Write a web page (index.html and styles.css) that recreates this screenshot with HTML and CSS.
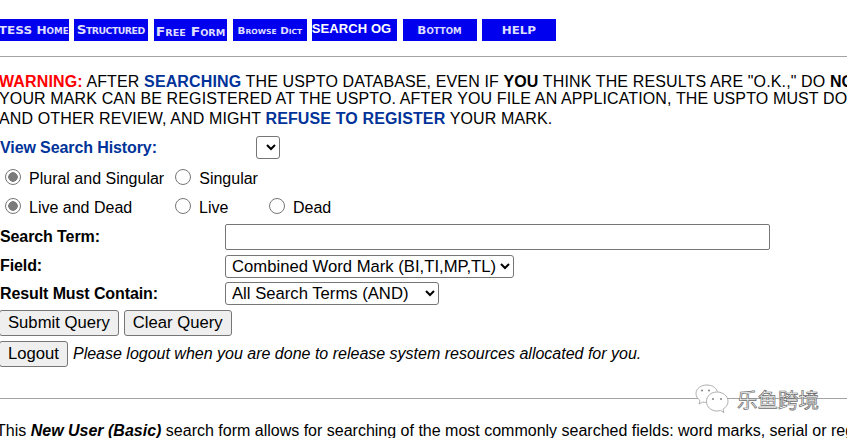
FILE: index.html
```html
<!DOCTYPE html>
<html lang="en">
<head>
<meta charset="utf-8">
<title>Trademark Search</title>
<link rel="stylesheet" href="styles.css">
</head>
<body>
<nav class="nav">
  <a class="btn w1"><span class="t t1">TESS Home</span></a>
  <a class="btn w2"><span class="t t2">Structured</span></a>
  <a class="btn w3"><span class="t t3">Free Form</span></a>
  <a class="btn w4"><span class="t t4">Browse Dict</span></a>
  <a class="btn w5"><span class="t5">SEARCH OG</span></a>
  <a class="btn w6"><span class="t t6">Bottom</span></a>
  <a class="btn w7"><span class="t t7">HELP</span></a>
</nav>
<hr class="rule rule-top">
<p class="warning"><span class="line"><b class="red">WARNING:</b> AFTER <b class="navy">SEARCHING</b> THE USPTO DATABASE, EVEN IF <b>YOU</b> THINK THE RESULTS ARE "O.K.," DO <b>NOT</b> ASSUME THAT</span><span class="line l2">YOUR MARK CAN BE REGISTERED AT THE USPTO. AFTER YOU FILE AN APPLICATION, THE USPTO MUST DO ITS OWN SEARCH</span><span class="line l3">AND OTHER REVIEW, AND MIGHT <b class="navy">REFUSE TO REGISTER</b> YOUR MARK.</span></p>
<form class="form">
  <div class="row history">
    <b class="navy label-h">View Search History:</b>
    <select class="sel-empty"><option></option></select>
  </div>
  <div class="row radios r1">
    <label class="opt o1"><input type="radio" name="p" checked>Plural and Singular</label>
    <label class="opt"><input type="radio" name="p">Singular</label>
  </div>
  <div class="row radios r2">
    <label class="opt o1b"><input type="radio" name="l" checked>Live and Dead</label>
    <label class="opt o2b"><input type="radio" name="l">Live</label>
    <label class="opt"><input type="radio" name="l">Dead</label>
  </div>
  <div class="row field r-term">
    <b class="lab">Search Term:</b>
    <input class="term" type="text">
  </div>
  <div class="row field r-field">
    <b class="lab">Field:</b>
    <select class="sel s-field"><option>Combined Word Mark (BI,TI,MP,TL)</option></select>
  </div>
  <div class="row field r-must">
    <b class="lab">Result Must Contain:</b>
    <select class="sel s-must"><option>All Search Terms (AND)</option></select>
  </div>
  <div class="row actions">
    <button type="button" class="b">Submit Query</button>
    <button type="button" class="b">Clear Query</button>
  </div>
  <div class="row actions logout">
    <button type="button" class="b">Logout</button>
    <i>Please logout when you are done to release system resources allocated for you.</i>
  </div>
</form>
<hr class="rule rule-bottom">
<p class="intro">This <b><i>New User (Basic)</i></b> search form allows for searching of the most commonly searched fields: word marks, serial or registration numbers, and owner names.</p>
<div class="mark">
  <svg class="wx" width="34" height="30" viewBox="0 0 34 30" fill="#fff" stroke="#9a9a9a" stroke-width=".8">
    <path d="M12 1C6 1 1 4.500 1 9.500c0 3 1.500 5 4 7l-1 3.500 4-2c1 .3 2 .5 3.500 .5"/>
    <path d="M12 1c5 0 9 2.500 10.500 6.500"/>
    <path d="M22 8c-6 0-10.500 4-10.500 9.500S16 27 22 27c1.500 0 2.500-.2 3.500-.6l3.500 2.200-1-3.400c3-1.800 5-4.800 5-7.700C33 12 28 8 22 8z"/>
    <circle cx="7" cy="6.500" r="1.100" fill="#8c8c8c" stroke="none"/>
    <circle cx="14" cy="6.500" r="1.100" fill="#8c8c8c" stroke="none"/>
    <circle cx="18" cy="15" r="1.100" fill="#8c8c8c" stroke="none"/>
    <circle cx="26" cy="15" r="1.100" fill="#8c8c8c" stroke="none"/>
  </svg>
  <span class="wm">乐鱼跨境</span>
</div>
</body>
</html>
```
FILE: styles.css
```css
html, body {
  margin: 0;
  padding: 0;
  height: 438px;
  overflow: hidden;
  background: #fff;
  color: #000;
  font: 16px/18px "Liberation Sans", Arial, sans-serif;
}
body { position: relative; width: 847px; }
.nav {
  display: flex;
  align-items: flex-start;
  margin: 19px 0 0 -6px;
  height: 22px;
}
.btn {
  display: flex;
  height: 22px;
  flex: none;
  align-items: center;
  justify-content: center;
  background: #0000ee;
  color: #dedeff;
  white-space: nowrap;
  overflow: hidden;
}
.t {
  display: block;
  font-family: "DejaVu Sans", sans-serif;
  font-weight: bold;
  font-variant: small-caps;
}
.w1 { width: 75px; margin-right: 5px; }
.w2 { width: 74px; margin-right: 6px; }
.w3 { width: 73px; margin-right: 6px; }
.w4 { width: 74px; margin-right: 5px; }
.w5 { width: 85px; margin-right: 6px; }
.w6 { width: 74px; margin-right: 5px; }
.w7 { width: 74px; }
.t1 { font-size: 11px; transform: translate(2px, 1px) scaleX(1.1); }
.t2 { font-size: 13px; letter-spacing: -.5px; transform: scaleX(1.04); }
.t3 { font-size: 13px; transform: translateY(2px) scaleX(1.07); }
.t4 { font-size: 9.500px; transform: translateY(1px) scaleX(1.08); }
.t5 {
  display: block;
  font: bold 13px "Liberation Sans", sans-serif;
  letter-spacing: .1px;
  color: #fff;
  transform: translate(-3px, -2px);
}
.t6 { font-size: 11px; transform: translateY(1px) scaleX(1.08); }
.t7 { font-size: 11px; transform: translateY(1px) scaleX(1.08); }
.rule {
  border: 0;
  height: 1px;
  background: #a3a3a3;
  margin: 0;
}
.rule-top { margin-top: 15px; }
.warning {
  margin: 16px 0 0 -1px;
  white-space: nowrap;
  letter-spacing: .13px;
}
.line { display: block; height: 18px; }
.l2 { margin-top: -1px; }
.l3 { margin-top: 2px; }
.red { color: #ff0000; }
.navy { color: #003399; }
.form { margin: 8px 0 0; }
.row { display: flex; align-items: center; white-space: nowrap; }
.history { height: 23px; }
.label-h { width: 256px; letter-spacing: -.1px; }
.sel-empty, .sel, .term, .b {
  font: 16.670px "Liberation Sans", Arial, sans-serif;
  box-sizing: border-box;
  margin: 0;
}
.sel-empty {
  width: 24px;
  height: 23px;
  background: #fff;
  border: 1px solid #767676;
  border-radius: 3px;
}
.radios input {
  appearance: none;
  box-sizing: border-box;
  width: 16px;
  height: 16px;
  margin: 0 8px 0 5px;
  border: 1px solid #767676;
  border-radius: 50%;
  background: #fff;
  position: relative;
  top: -2px;
}
.radios input:checked {
  background: radial-gradient(circle, #7b7b7b 0 4.500px, #fff 5px);
}
.opt { display: flex; align-items: center; }
.r1 { margin-top: 6px; height: 28px; }
.r2 { height: 29px; }
.o1 { margin-right: 6px; }
.o1b { width: 170px; }
.o2b { width: 94px; }
.field { height: 28px; }
.r-term { margin-top: 1px; }
.r-field { margin-top: 1px; }
.lab { width: 225px; flex: none; letter-spacing: -.1px; }
.term {
  width: 545px;
  height: 26px;
  background: #fff;
  border: 1px solid #767676;
  border-radius: 2px;
}
.sel {
  height: 23px;
  background: #fff;
  border: 1px solid #767676;
  border-radius: 3px;
  padding: 0 0 0 2px;
  color: #000;
}
.s-field { width: 289px; }
.sel.s-must { width: 214px; margin-top: -2px; }
.actions { margin-top: 2px; margin-left: -1px; }
.b {
  height: 26px;
  padding: 0 8px;
  background: #efefef;
  border: 1px solid #767676;
  border-radius: 3px;
  margin-right: 5px;
  color: #000;
}
.logout { margin-top: 5px; }
.logout .b { margin-right: 5px; }
.rule-bottom { margin-top: 31px; }
.intro {
  margin: 23px 0 0 -4px;
  white-space: nowrap;
}
.mark {
  position: absolute;
  left: 695px;
  top: 384px;
  display: flex;
  align-items: center;
  gap: 8px;
}
.wx { display: block; flex: none; }
.wm {
  font: 20.500px/1 "Noto Sans CJK SC", sans-serif;
  color: #fff;
  -webkit-text-stroke: .7px #6a6a6a;
}
```
